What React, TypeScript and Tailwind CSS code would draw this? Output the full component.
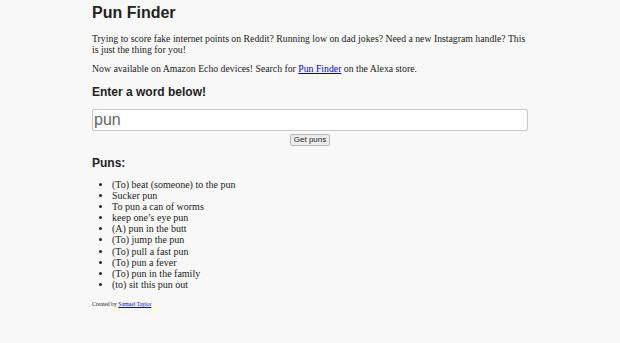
import React, { useState } from 'react';

const PUNS = [
  '(To) beat (someone) to the pun',
  'Sucker pun',
  'To pun a can of worms',
  'keep one\u2019s eye pun',
  '(A) pun in the butt',
  '(To) jump the pun',
  '(To) pull a fast pun',
  '(To) pun a fever',
  '(To) pun in the family',
  '(to) sit this pun out',
];

const App: React.FC = () => {
  const [word, setWord] = useState('pun');

  return (
    <div className="min-h-[343px] bg-[#f8f8f8] text-[#222]">
      <div className="mx-auto w-[436px] pt-[4px]">
        <h1 className="text-[16px] font-bold leading-[18px] font-['Liberation_Sans',Arial,sans-serif]">Pun Finder</h1>

        <p className="mt-[10.5px] text-[9.75px] leading-[11px] font-['Liberation_Serif','Times_New_Roman',serif]">
          Trying to score fake internet points on Reddit? Running low on dad jokes? Need a new Instagram handle? This
          is just the thing for you!
        </p>
        <p className="mt-[8.5px] text-[9.75px] leading-[11px] font-['Liberation_Serif','Times_New_Roman',serif]">
          Now available on Amazon Echo devices! Search for{' '}
          <a href="#" className="text-[#0000ee] underline">Pun Finder</a> on the Alexa store.
        </p>

        <h2 className="mt-[10.5px] text-[12px] font-bold leading-[14px] font-['Liberation_Sans',Arial,sans-serif]">Enter a word below!</h2>

        <form className="mt-[10px] flex flex-col items-center" onSubmit={(e) => e.preventDefault()}>
          <input
            value={word}
            onChange={(e) => setWord(e.target.value)}
            className="h-[22px] w-full rounded-[2px] border border-[#c8c8c8] bg-white px-[1px] text-[16px] text-[#666] outline-none font-['Liberation_Sans',Arial,sans-serif]"
          />
          <button
            type="submit"
            className="mt-[3px] h-[12px] rounded-[2px] border border-[#b8b8b8] bg-[#ececec] px-[3px] text-[8px] leading-[10px] text-[#222] font-['Liberation_Sans',Arial,sans-serif]"
          >
            Get puns
          </button>
        </form>

        <h2 className="mt-[10px] text-[12px] font-bold leading-[14px] font-['Liberation_Sans',Arial,sans-serif]">Puns:</h2>

        <ul className="mt-[9.5px] list-disc pl-[20px] text-[10px] leading-[11.1px] font-['Liberation_Serif','Times_New_Roman',serif]">
          {PUNS.map((p) => (
            <li key={p}>{p}</li>
          ))}
        </ul>

        <p className="mt-[10.5px] text-[5.7px] leading-[8px] font-['Liberation_Serif','Times_New_Roman',serif]">
          Created by <a href="#" className="text-[#0000ee] underline">Samuel Taylor</a>
        </p>
      </div>
    </div>
  );
};

export default App;
